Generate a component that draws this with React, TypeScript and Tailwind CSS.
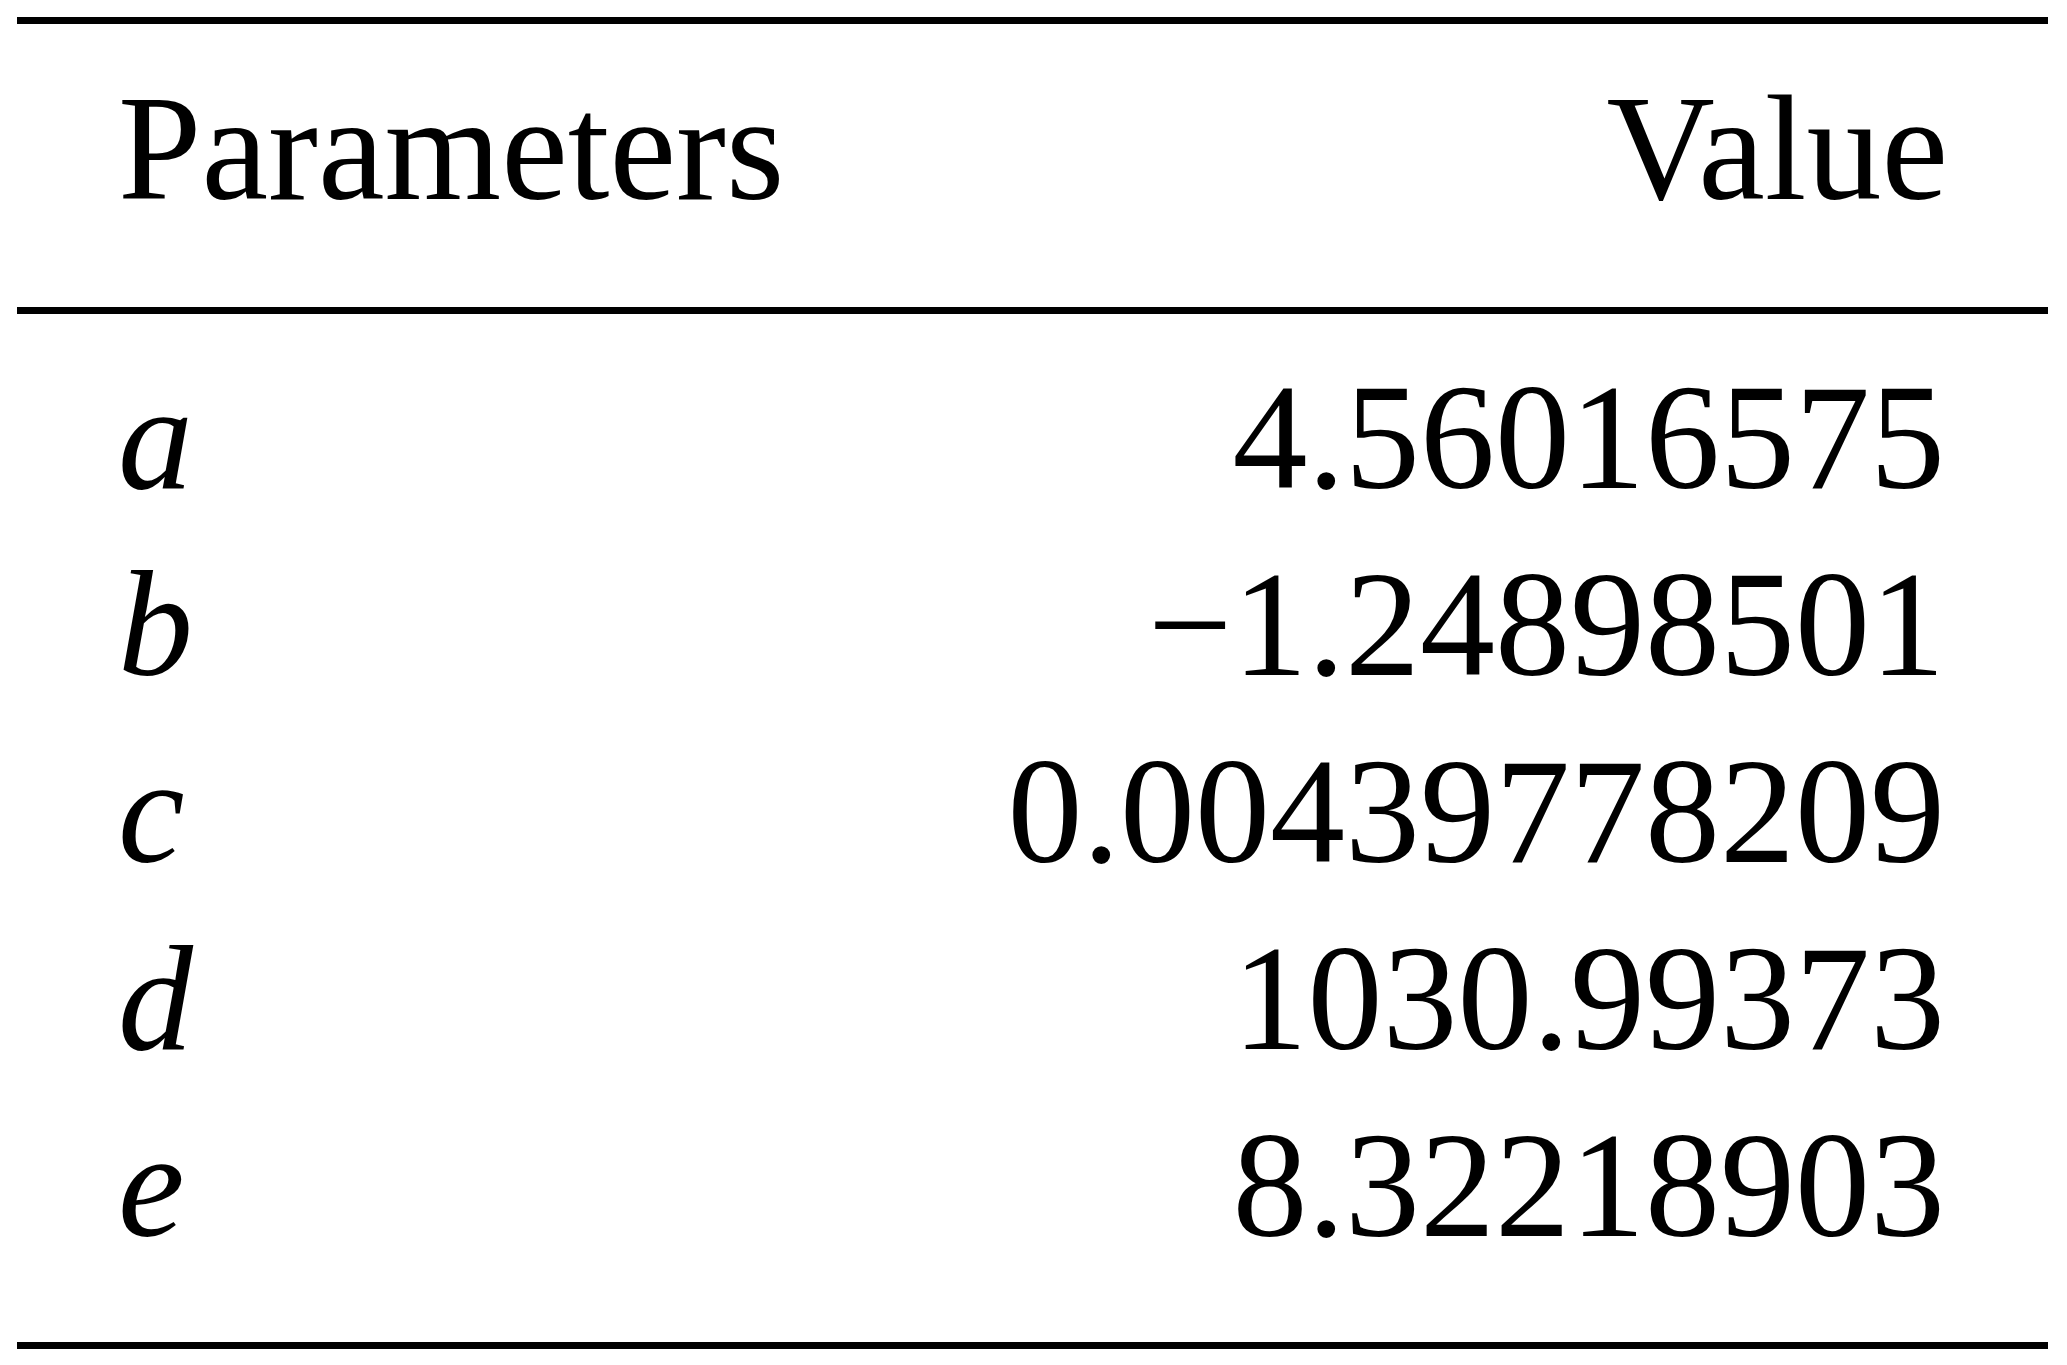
const rows: [string, string][] = [
  ["a", "4.56016575"],
  ["b", "\u22121.24898501"],
  ["c", "0.00439778209"],
  ["d", "1030.99373"],
  ["e", "8.32218903"],
];

function Rule() {
  return <div className="h-[7px] w-full bg-black" />;
}

export default function App() {
  return (
    <div
      className="flex h-[1365px] w-[2067px] flex-col bg-white pl-[17px] pr-[19px] pt-[17px] text-black"
      style={{ fontFamily: '"Liberation Serif", "Times New Roman", serif' }}
    >
      <Rule />
      <div className="flex h-[187px] items-center justify-between pl-[101px] pr-[100px] text-[150px] leading-[187px] mt-[31px] mb-[65px]">
        <span>Parameters</span>
        <span>Value</span>
      </div>
      <Rule />
      <div className="flex flex-col pt-[30px] pb-[63px]">
        {rows.map(([name, value]) => (
          <div
            key={name}
            className="flex h-[187px] items-center justify-between pl-[101px] pr-[103px] text-[150px] leading-[187px]"
          >
            <span className="italic">{name}</span>
            <span>{value}</span>
          </div>
        ))}
      </div>
      <Rule />
    </div>
  );
}
